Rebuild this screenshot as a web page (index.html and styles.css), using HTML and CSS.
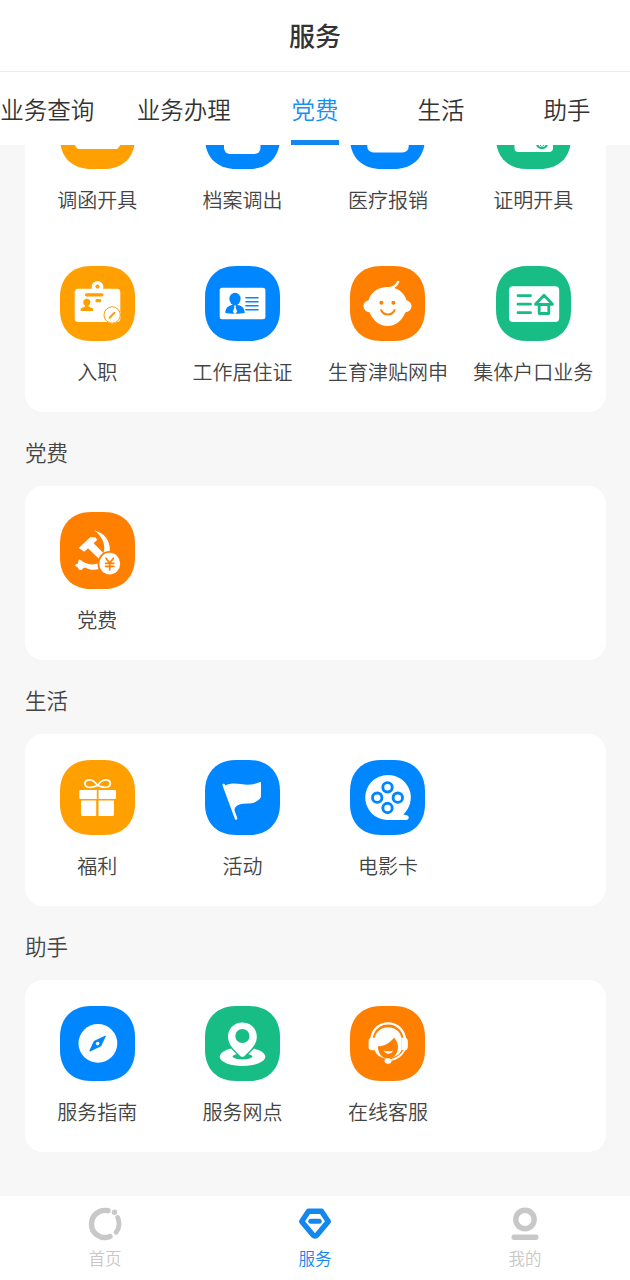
FILE: index.html
```html
<!DOCTYPE html>
<html lang="zh-CN">
<head>
<meta charset="utf-8">
<title>服务</title>
<link rel="stylesheet" href="styles.css">
</head>
<body>
<svg class="defs" width="0" height="0">
  <defs><path id="tile" d="M0 31C0 12 12 0 31 0H44C63 0 75 12 75 31V44C75 63 63 75 44 75H31C12 75 0 63 0 44Z"/></defs>
</svg>
<div class="app">
  <header class="title-bar">服务</header>
  <nav class="tabs">
    <a class="tab wide">业务查询</a>
    <a class="tab wide">业务办理</a>
    <a class="tab active">党费</a>
    <a class="tab">生活</a>
    <a class="tab">助手</a>
  </nav>

  <main class="content">
    <div class="scroll">
      <section class="card">
        <div class="item">
          <svg class="icon orange-light" viewBox="0 0 75 75"><use href="#tile"/><path class="w" d="M14.500 20h46v31q-1.500 1.500-2.500 3.300-.5.700-1.500.7h-38q-1 0-1.500-.7-1-1.800-2.500-3.300z"/></svg>
          <span>调函开具</span>
        </div>
        <div class="item">
          <svg class="icon blue" viewBox="0 0 75 75"><use href="#tile"/><rect class="w" x="19" y="16" width="36.5" height="44" rx="6"/></svg>
          <span>档案调出</span>
        </div>
        <div class="item">
          <svg class="icon blue" viewBox="0 0 75 75"><use href="#tile"/><rect class="w" x="17.3" y="18" width="41.4" height="40.5" rx="6"/></svg>
          <span>医疗报销</span>
        </div>
        <div class="item">
          <svg class="icon green" viewBox="0 0 75 75"><use href="#tile"/><rect class="w" x="18.5" y="17" width="38.5" height="41" rx="4"/><circle cx="46" cy="49" r="6.2"/><path class="wl thin" d="M43 51l1.5 2 1.5-2 1.5 2 1.5-2"/></svg>
          <span>证明开具</span>
        </div>
        <div class="item">
          <svg class="icon orange-light" viewBox="0 0 75 75"><use href="#tile"/>
            <rect class="w" x="14.7" y="22.7" width="45.6" height="33.3" rx="3.5"/><circle class="w" cx="37.5" cy="20.8" r="5.9"/><circle cx="37.5" cy="20.6" r="2.1"/>
            <path class="cl" stroke-width="3.2" d="M26.5 28.8h15.5M37 34.7h2.8"/>
            <circle cx="26.8" cy="36.3" r="3.5"/><path d="M25 38h3.6v2.4l4.4 2.2V45H20.700v-2.400l4.300-2.200z"/>
            <circle class="w" cx="52.2" cy="49" r="8.6"/><circle class="cl" cx="52.2" cy="49" r="8.2" stroke-width="1"/>
            <path class="cl" stroke-width="2" d="M50.3 51l4.2-4.2"/><path d="M48.5 53l.7-2.7 2 2z"/></svg>
          <span>入职</span>
        </div>
        <div class="item">
          <svg class="icon blue" viewBox="0 0 75 75"><use href="#tile"/>
            <rect class="w" x="14.7" y="21.8" width="45.7" height="31.5" rx="2.5"/>
            <ellipse cx="30" cy="33" rx="5.6" ry="6.2"/><path d="M27.6 37h4.8v1.8c4.4.8 7.3 3.4 7.3 8.3-3 .9-16 .9-19.4 0 0-4.900 2.900-7.500 7.300-8.300z"/>
            <path class="w" d="M29 39.5h2l-.4 2 1.600 4.300L30 48.300l-2.200-2.500 1.600-4.300z"/>
            <path class="cl" stroke-width="1.6" d="M41 31.8h12M41 35.8h12M41 39.8h12M41 43.8h12"/></svg>
          <span>工作居住证</span>
        </div>
        <div class="item">
          <svg class="icon orange" viewBox="0 0 75 75"><use href="#tile"/>
            <path class="w" d="M37.500 21c9.500 0 16.500 5 19 13.200 3.300.9 5 3.100 5 5.900 0 3.200-2.200 5.800-6 6.200C52 54.500 46 60 37.500 60S23 54.500 19.500 46.300c-3.700-.4-6-3-6-6.200 0-2.800 1.700-5 5-5.900C21 26 28 21 37.500 21z"/>
            <path class="wl" stroke-width="2.3" d="M37 22.300c5.500 0 9.400-2.300 11.100-6.300"/>
            <circle cx="31.4" cy="36.700" r="2"/><circle cx="43.400" cy="36.700" r="2"/><path class="cl" stroke-width="2" d="M31.200 44.200c3 5.800 10.300 5.800 13.300 0"/></svg>
          <span>生育津贴网申</span>
        </div>
        <div class="item">
          <svg class="icon green" viewBox="0 0 75 75"><use href="#tile"/>
            <rect class="w" x="13" y="20.300" width="50.200" height="35.700" rx="4"/>
            <path class="cl" stroke-width="2.800" d="M22 29.700h12.500M22 38.200h12.500M22 46.700h12.500M39.500 38.300L48 29.300l8.500 9zM43.200 38.500h9.600v9h-9.600z"/></svg>
          <span>集体户口业务</span>
        </div>
      </section>

      <h2 class="heading">党费</h2>
      <section class="card tall">
        <div class="item">
          <svg class="icon orange" viewBox="0 0 75 75" preserveAspectRatio="none"><use href="#tile"/>
            <path class="w" d="M18.700 35.100L30.500 24.300l4.800.4 2 2.300-3.700 3.500L46.500 43l-5.300 4.700L28 35.300l-3.800 3.500z"/>
            <path class="w" d="M34 17.700C44 20 50.500 27.500 49.800 38l-6.300 2C46 32 42.500 23.500 34 17.700z"/>
            <path class="w" d="M19.500 46.300c1.500.2 2 1.700 4.500 2.700 5 2.600 10.500 2.800 15 .5v6c-4.500 1.400-10 .7-14-1.500-2.200.2-2.200 2.500-4.500 2.500-2.400 0-2-3-4.500-3.500-1.500-1-.5-2.600 1-2.400 1.800.2.800-4.500 2.500-4.300z"/>
            <circle cx="49.700" cy="50.300" r="12.300"/><circle class="w" cx="49.700" cy="50.300" r="10.500"/>
            <path class="cl" stroke-width="1.700" d="M46 45l3.700 4.800L53.400 45M45.600 50h8.200M45.600 53h8.200M49.700 50v6.300"/></svg>
          <span>党费</span>
        </div>
      </section>

      <h2 class="heading">生活</h2>
      <section class="card">
        <div class="item">
          <svg class="icon orange-light" viewBox="0 0 75 75"><use href="#tile"/>
            <path class="w" d="M20.500 30h16.300v9H20.500a1.200 1.200 0 0 1-1.200-1.200v-6.600A1.200 1.200 0 0 1 20.500 30zM38.500 30h16.300a1.200 1.200 0 0 1 1.200 1.200v6.600a1.200 1.200 0 0 1-1.200 1.200H38.500zM21 40.500h15.200V56H22.500A1.500 1.500 0 0 1 21 54.500zM38.500 40.500H54v14a1.500 1.500 0 0 1-1.500 1.500h-14z"/>
            <path class="wl" stroke-width="1.700" d="M37.600 25.500c-3-4.500-7-6.300-10-5.400-3.600 1-3.600 5.600 0 6.900 3 1 7-.2 10-1.500 3 1.300 7 2.500 10 1.500 3.600-1.300 3.600-5.900 0-6.900-3-.9-7 .9-10 5.400z"/></svg>
          <span>福利</span>
        </div>
        <div class="item">
          <svg class="icon blue" viewBox="0 0 75 75"><use href="#tile"/>
            <path class="w" d="M20 25.500c12-5.500 20 3 34.500-3.200 1-.5 1.500-.3 1.500.7v14.300c-4 5.500-9 6.200-15 6.200-6.500.2-11.500 1.500-11.800 8z"/>
            <path class="wl" stroke-width="2.500" d="M18.700 25l12.400 33.500"/></svg>
          <span>活动</span>
        </div>
        <div class="item">
          <svg class="icon blue" viewBox="0 0 75 75"><use href="#tile"/>
            <path class="w" d="M37.700 15a22.600 22.600 0 0 1 15.500 39.500l3.600.8c2.800.8 2.500 4.700-.5 4.700H37.700a22.500 22.500 0 0 1 0-45z"/>
            <g class="cl" stroke-width="2.900"><circle cx="37.500" cy="27.300" r="4.700"/><circle cx="27.200" cy="37.700" r="4.700"/><circle cx="47.800" cy="37.700" r="4.700"/><circle cx="37.500" cy="48" r="4.700"/></g></svg>
          <span>电影卡</span>
        </div>
      </section>

      <h2 class="heading">助手</h2>
      <section class="card">
        <div class="item">
          <svg class="icon blue" viewBox="0 0 75 75"><use href="#tile"/>
            <circle class="w" cx="37.900" cy="37.400" r="19.400"/><path d="M45 29.700q1-.3.700.7l-4.600 9.800-11 5.200q-1 .2-.7-.8l4.500-9.700z"/><circle class="w" cx="37.600" cy="37.600" r="1.800"/></svg>
          <span>服务指南</span>
        </div>
        <div class="item">
          <svg class="icon green" viewBox="0 0 75 75"><use href="#tile"/>
            <ellipse class="w" cx="37.500" cy="50.700" rx="22.800" ry="9.300"/><ellipse cx="37.500" cy="50.500" rx="10" ry="2.900"/>
            <path d="M22.700 39L36 53h3l13.300-14z"/>
            <path class="w" d="M37.400 16.500c8.300 0 14.400 6.200 14.400 14.200 0 7.700-5.600 12.800-12.200 19.200q-2.200 1.800-4.400 0C28.600 43.500 23 38.400 23 30.700c0-8 6.100-14.200 14.400-14.200z"/><circle cx="37.400" cy="30" r="7.100"/></svg>
          <span>服务网点</span>
        </div>
        <div class="item">
          <svg class="icon orange" viewBox="0 0 75 75"><use href="#tile"/>
            <path class="wl" stroke-width="2.400" d="M21.500 32C24.500 12.500 51.500 12.500 54.800 32"/>
            <path class="w" d="M24.700 32C27 17.500 49 17.500 51.500 32v11.800c-2 5.500-5 7.800-9.500 8.800h-7.500c-5.500-1.800-8.500-4-9.800-8.800z"/>
            <path d="M27.800 40.300c5.200.2 11.500-2.300 16.200-8.500 3.500 3.300 5.300 9 3 14.500-2.500 5-6 6.200-9.300 6.200-5.500 0-9.500-4.500-9.900-12.200z"/>
            <path class="w" d="M25 31.700v12.600h-3.500c-1.800 0-2.900-1.500-2.900-3.300v-6c0-1.800 1.100-3.300 2.900-3.300zM51.400 31.700h3.500c1.800 0 2.900 1.500 2.900 3.300v6c0 1.800-1.100 3.300-2.900 3.300h-3.500z"/>
            <path class="w" d="M33.700 44.500q4.700 1.700 9.300 0c-1.800 4.300-7.300 4.300-9.300 0z"/>
            <path class="cl" stroke-width="4.500" d="M53.500 46.500C51 50.500 47 53 40 54.500"/>
            <path class="wl" stroke-width="1.700" d="M54.500 44C51.500 50 47.500 53 39 54.500"/><ellipse class="w" cx="38" cy="55" rx="3.500" ry="2.800"/></svg>
          <span>在线客服</span>
        </div>
      </section>
    </div>
  </main>

  <footer class="tabbar">
    <a class="bar-item">
      <svg class="bar-icon" viewBox="0 0 34 34"><path stroke-width="5.400" d="M20 3.700C10.500 1.700 3.500 9 3.500 17.200 3.500 26.500 13 33 22 29.500"/><path stroke-width="4.800" d="M29.700 10.500c2 5 1.700 10.500-1.500 14.800"/><circle class="dot" cx="26.500" cy="5.300" r="2.700"/></svg>
      <span>首页</span>
    </a>
    <a class="bar-item current">
      <svg class="bar-icon" viewBox="0 0 34 34"><path stroke-width="5.400" d="M10.500 4.300h13l6.800 10.200L19 28q-2 2.300-4 0L3.700 14.500z"/><path stroke-width="5" d="M12.800 14.300h8.400"/></svg>
      <span>服务</span>
    </a>
    <a class="bar-item">
      <svg class="bar-icon" viewBox="0 0 34 34"><circle stroke-width="5.400" cx="17" cy="12.500" r="9.200"/><path stroke-width="5.400" d="M6.200 30.300h21.600"/></svg>
      <span>我的</span>
    </a>
  </footer>
</div>
</body>
</html>
```
FILE: styles.css
```css
* { box-sizing: border-box; }

body {
  margin: 0;
  font-family: "Noto Sans CJK SC", sans-serif;
  font-weight: 350;
  color: #333;
  background: #f7f7f7;
}

.defs { display: block; }

.app {
  width: 630px;
  height: 1280px;
  display: flex;
  flex-direction: column;
  overflow: hidden;
}

.title-bar {
  height: 72px;
  flex: none;
  background: #fff;
  border-bottom: 1px solid #ececec;
  text-align: center;
  font-size: 26px;
  font-weight: 500;
  line-height: 70px;
}

.tabs {
  height: 73px;
  flex: none;
  display: flex;
  background: #fff;
}

.tab {
  flex: 0 0 126px;
  display: flex;
  flex-direction: column;
  align-items: center;
  justify-content: space-between;
  font-size: 23.5px;
  line-height: 34px;
  padding-top: 20px;
  white-space: nowrap;
}

.tab.wide { flex-basis: 136.5px; }
.tab.wide:first-child { margin-left: -21px; }

.tab.active { color: #1890ef; }

.tab.active::after {
  content: "";
  width: 48px;
  height: 5px;
  background: #1487ee;
}

.content {
  flex: 1;
  min-height: 0;
  overflow: hidden;
  padding: 0 24px 0 24.5px;
}

.scroll { margin-top: -77px; }

.card {
  background: #fff;
  border-radius: 18px;
  display: grid;
  grid-template-columns: repeat(4, 1fr);
  grid-auto-rows: 172px;
}

.card.tall { grid-auto-rows: 174px; }

.item {
  display: flex;
  flex-direction: column;
  align-items: center;
  padding-top: 26px;
  font-size: 20px;
  line-height: 30px;
  color: #444;
  white-space: nowrap;
}

.item span { margin-top: 16px; }

.icon {
  width: 75px;
  height: 75px;
  flex: none;
  fill: currentColor;
}

.card.tall .icon { height: 77px; }
.card.tall .item span { margin-top: 15.5px; }

.orange-light { color: #ff9f00; }
.orange { color: #ff7f00; }
.blue { color: #0087ff; }
.green { color: #18bd85; }

.w { fill: #fff; }

.wl, .cl {
  fill: none;
  stroke: #fff;
  stroke-linecap: round;
  stroke-linejoin: round;
}

.cl { stroke: currentColor; }
.thin { stroke-width: 1px; }

.heading {
  margin: 0;
  height: 74px;
  padding-left: 0.5px;
  font-size: 21.5px;
  font-weight: inherit;
  line-height: 80px;
  color: #444;
}

.tabbar {
  height: 84px;
  flex: none;
  display: flex;
  background: #fff;
}

.bar-item {
  flex: 1;
  display: flex;
  flex-direction: column;
  align-items: center;
  padding-top: 11px;
  color: #c8c8c8;
  font-size: 16.5px;
  line-height: 24px;
}

.bar-item span { margin-top: 5px; }
.bar-item.current { color: #1487ee; }

.bar-icon {
  width: 34px;
  height: 34px;
  flex: none;
  fill: none;
  stroke: currentColor;
  stroke-linecap: round;
  stroke-linejoin: round;
}

.dot { fill: currentColor; stroke: none; }
```
